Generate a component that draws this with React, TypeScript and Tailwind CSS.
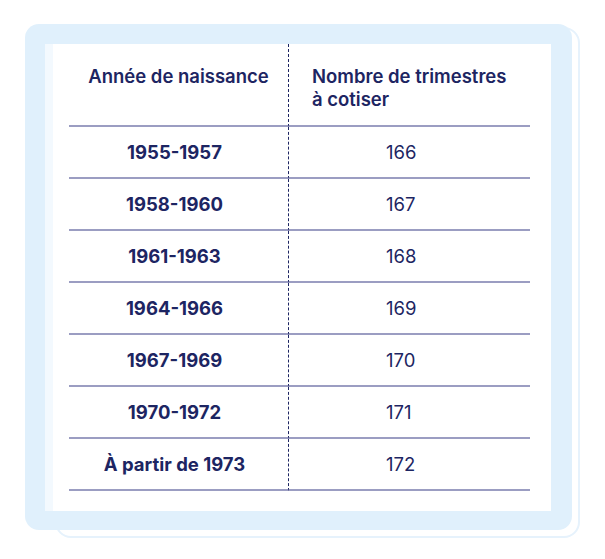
import React from "react";

const rows: [string, string][] = [
  ["1955-1957", "166"],
  ["1958-1960", "167"],
  ["1961-1963", "168"],
  ["1964-1966", "169"],
  ["1967-1969", "170"],
  ["1970-1972", "171"],
  ["À partir de 1973", "172"],
];

export default function App() {
  return (
    <div
      className="w-[605px] h-[559px] bg-white text-[#1d2562]"
      style={{ fontFamily: "Inter, 'Noto Sans', sans-serif" }}
    >
      <div className="relative ml-[25px] pt-[24px] w-[555px]">
        {/* back card */}
        <div className="absolute left-[30px] top-[27px] w-[525px] h-[511px] rounded-[16px] bg-white border-2 border-[#e6f2fc]" />
        <div className="relative w-[547px] h-[506px] rounded-[14px] bg-[#e0f0fc] pt-5 pl-5 pr-[21px] pb-[19px]">
          <div className="h-full bg-white border-l-[8px] border-[#f3f9fe]">
            <div className="pl-[16px] pr-[21px]">
              <div className="grid grid-cols-[219px_242px] text-[18.5px]">
                <div className="h-[83px] border-b-2 border-[#9b9dc2] pt-[21px] text-center font-semibold leading-[23px]">
                  Année de naissance
                </div>
                <div className="h-[83px] border-b-2 border-[#9b9dc2] border-l border-l-[#1d2562] [border-left-style:dashed] pt-[21px] pl-[23px] font-semibold leading-[23px]">
                  Nombre de trimestres
                  <br />à cotiser
                </div>
                {rows.map(([years, count]) => (
                  <React.Fragment key={years}>
                    <div className="h-[52px] border-b-2 border-[#9b9dc2] flex items-center justify-center pt-[2px] pr-[8px] font-bold">
                      {years}
                    </div>
                    <div className="h-[52px] border-b-2 border-[#9b9dc2] border-l border-l-[#1d2562] [border-left-style:dashed] flex items-center pt-[2px] pl-[97px]">
                      {count}
                    </div>
                  </React.Fragment>
                ))}
              </div>
            </div>
          </div>
        </div>
      </div>
    </div>
  );
}
